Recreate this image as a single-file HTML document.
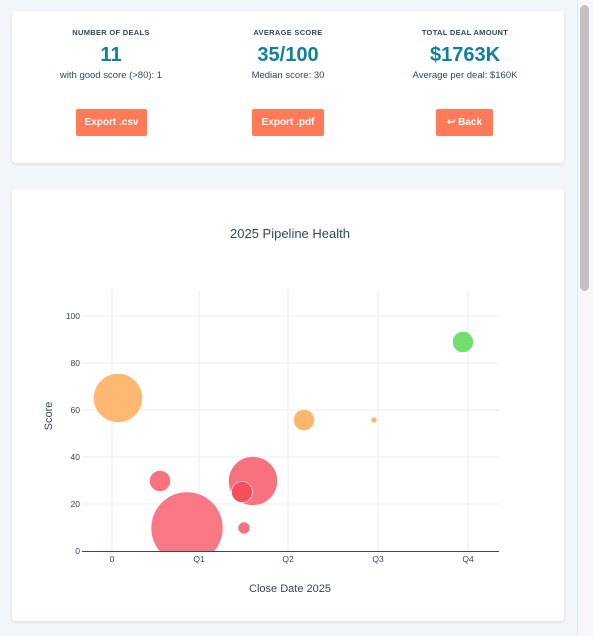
<!DOCTYPE html>
<html><head><style>
body{margin:0;width:593px;height:636px;background:#f3f6f9;font-family:"Liberation Sans",sans-serif;position:relative;overflow:hidden;color:#33475b}
.card{position:absolute;background:#fff;left:12px;width:552px;border-radius:3px;box-shadow:0 1px 3px rgba(0,0,0,.12)}
.col{position:absolute;top:0;width:180px;text-align:center}
.h{font-size:7.5px;font-weight:bold;letter-spacing:.3px;margin-top:17px}
.v{font-size:20px;font-weight:bold;color:#0f8199;margin-top:7px}
.s{font-size:9.5px;margin-top:3px}
.b{position:absolute;top:98px;height:27px;line-height:27px;background:#ff7a59;color:#fff;font-size:10px;font-weight:bold;border-radius:2px;text-align:center}
.sb{position:absolute;left:577px;top:0;width:16px;height:636px;background:#f7f7f7;border-left:1px solid #e6e6e6}
.th{position:absolute;left:580px;top:5px;width:9px;height:286px;background:#c1c1c1;border-radius:5px}
</style></head><body>
<div class="card" style="top:11px;height:152px">
 <div class="col" style="left:9px"><div class="h">NUMBER OF DEALS</div><div class="v">11</div><div class="s">with good score (&gt;80): 1</div></div>
 <div class="col" style="left:186px"><div class="h">AVERAGE SCORE</div><div class="v">35/100</div><div class="s">Median score: 30</div></div>
 <div class="col" style="left:363px"><div class="h">TOTAL DEAL AMOUNT</div><div class="v">$1763K</div><div class="s">Average per deal: $160K</div></div>
 <div class="b" style="left:64px;width:71px">Export .csv</div>
 <div class="b" style="left:240px;width:72px">Export .pdf</div>
 <div class="b" style="left:424px;width:57px">↩ Back</div>
</div>
<div class="card" style="top:189px;height:432px"></div>
<svg style="position:absolute;left:0;top:0" width="593" height="636" font-family="Liberation Sans, sans-serif">
<text x="290" y="238" font-size="13" text-anchor="middle" fill="#33475b">2025 Pipeline Health</text>
<g stroke="#eeeeee" stroke-width="1">
<line x1="82" x2="499" y1="316" y2="316"/><line x1="82" x2="499" y1="363" y2="363"/><line x1="82" x2="499" y1="410" y2="410"/><line x1="82" x2="499" y1="457" y2="457"/><line x1="82" x2="499" y1="504" y2="504"/>
<line x1="112" x2="112" y1="290" y2="551"/><line x1="199" x2="199" y1="290" y2="551"/><line x1="288" x2="288" y1="290" y2="551"/><line x1="378" x2="378" y1="290" y2="551"/><line x1="468" x2="468" y1="290" y2="551"/>
</g>
<defs><clipPath id="c"><rect x="82" y="290" width="417" height="261"/></clipPath></defs>
<g clip-path="url(#c)" stroke="#fff" stroke-width="0.6">
<circle cx="118" cy="398" r="24.5" fill="#ffb56b" opacity=".95"/>
<circle cx="187" cy="528" r="36" fill="#f8717f" opacity=".95"/>
<circle cx="160" cy="481" r="10.5" fill="#f8717f"/>
<circle cx="253" cy="481" r="24.5" fill="#f8717f"/>
<circle cx="242" cy="492" r="10.5" fill="#f74e5e"/>
<circle cx="244" cy="528" r="6" fill="#f8717f"/>
<circle cx="304" cy="420" r="10.5" fill="#ffb56b"/>
<circle cx="374" cy="420" r="3" fill="#ffb56b"/>
<circle cx="463" cy="342" r="10.5" fill="#6ee06e"/>
</g>
<line x1="82" x2="499" y1="551.5" y2="551.5" stroke="#444" stroke-width="1"/>
<g font-size="8.5" fill="#33475b" text-anchor="end">
<text x="80" y="319">100</text><text x="80" y="366">80</text><text x="80" y="413">60</text><text x="80" y="460">40</text><text x="80" y="507">20</text><text x="80" y="554">0</text>
</g>
<g font-size="8.5" fill="#33475b" text-anchor="middle">
<text x="112" y="562">0</text><text x="199" y="562">Q1</text><text x="288" y="562">Q2</text><text x="378" y="562">Q3</text><text x="468" y="562">Q4</text>
</g>
<text x="290" y="592" font-size="11" text-anchor="middle" fill="#33475b">Close Date 2025</text>
<text transform="translate(52,416) rotate(-90)" font-size="11" text-anchor="middle" fill="#33475b">Score</text>
</svg>
<div class="sb"></div><div class="th"></div>
</body></html>
